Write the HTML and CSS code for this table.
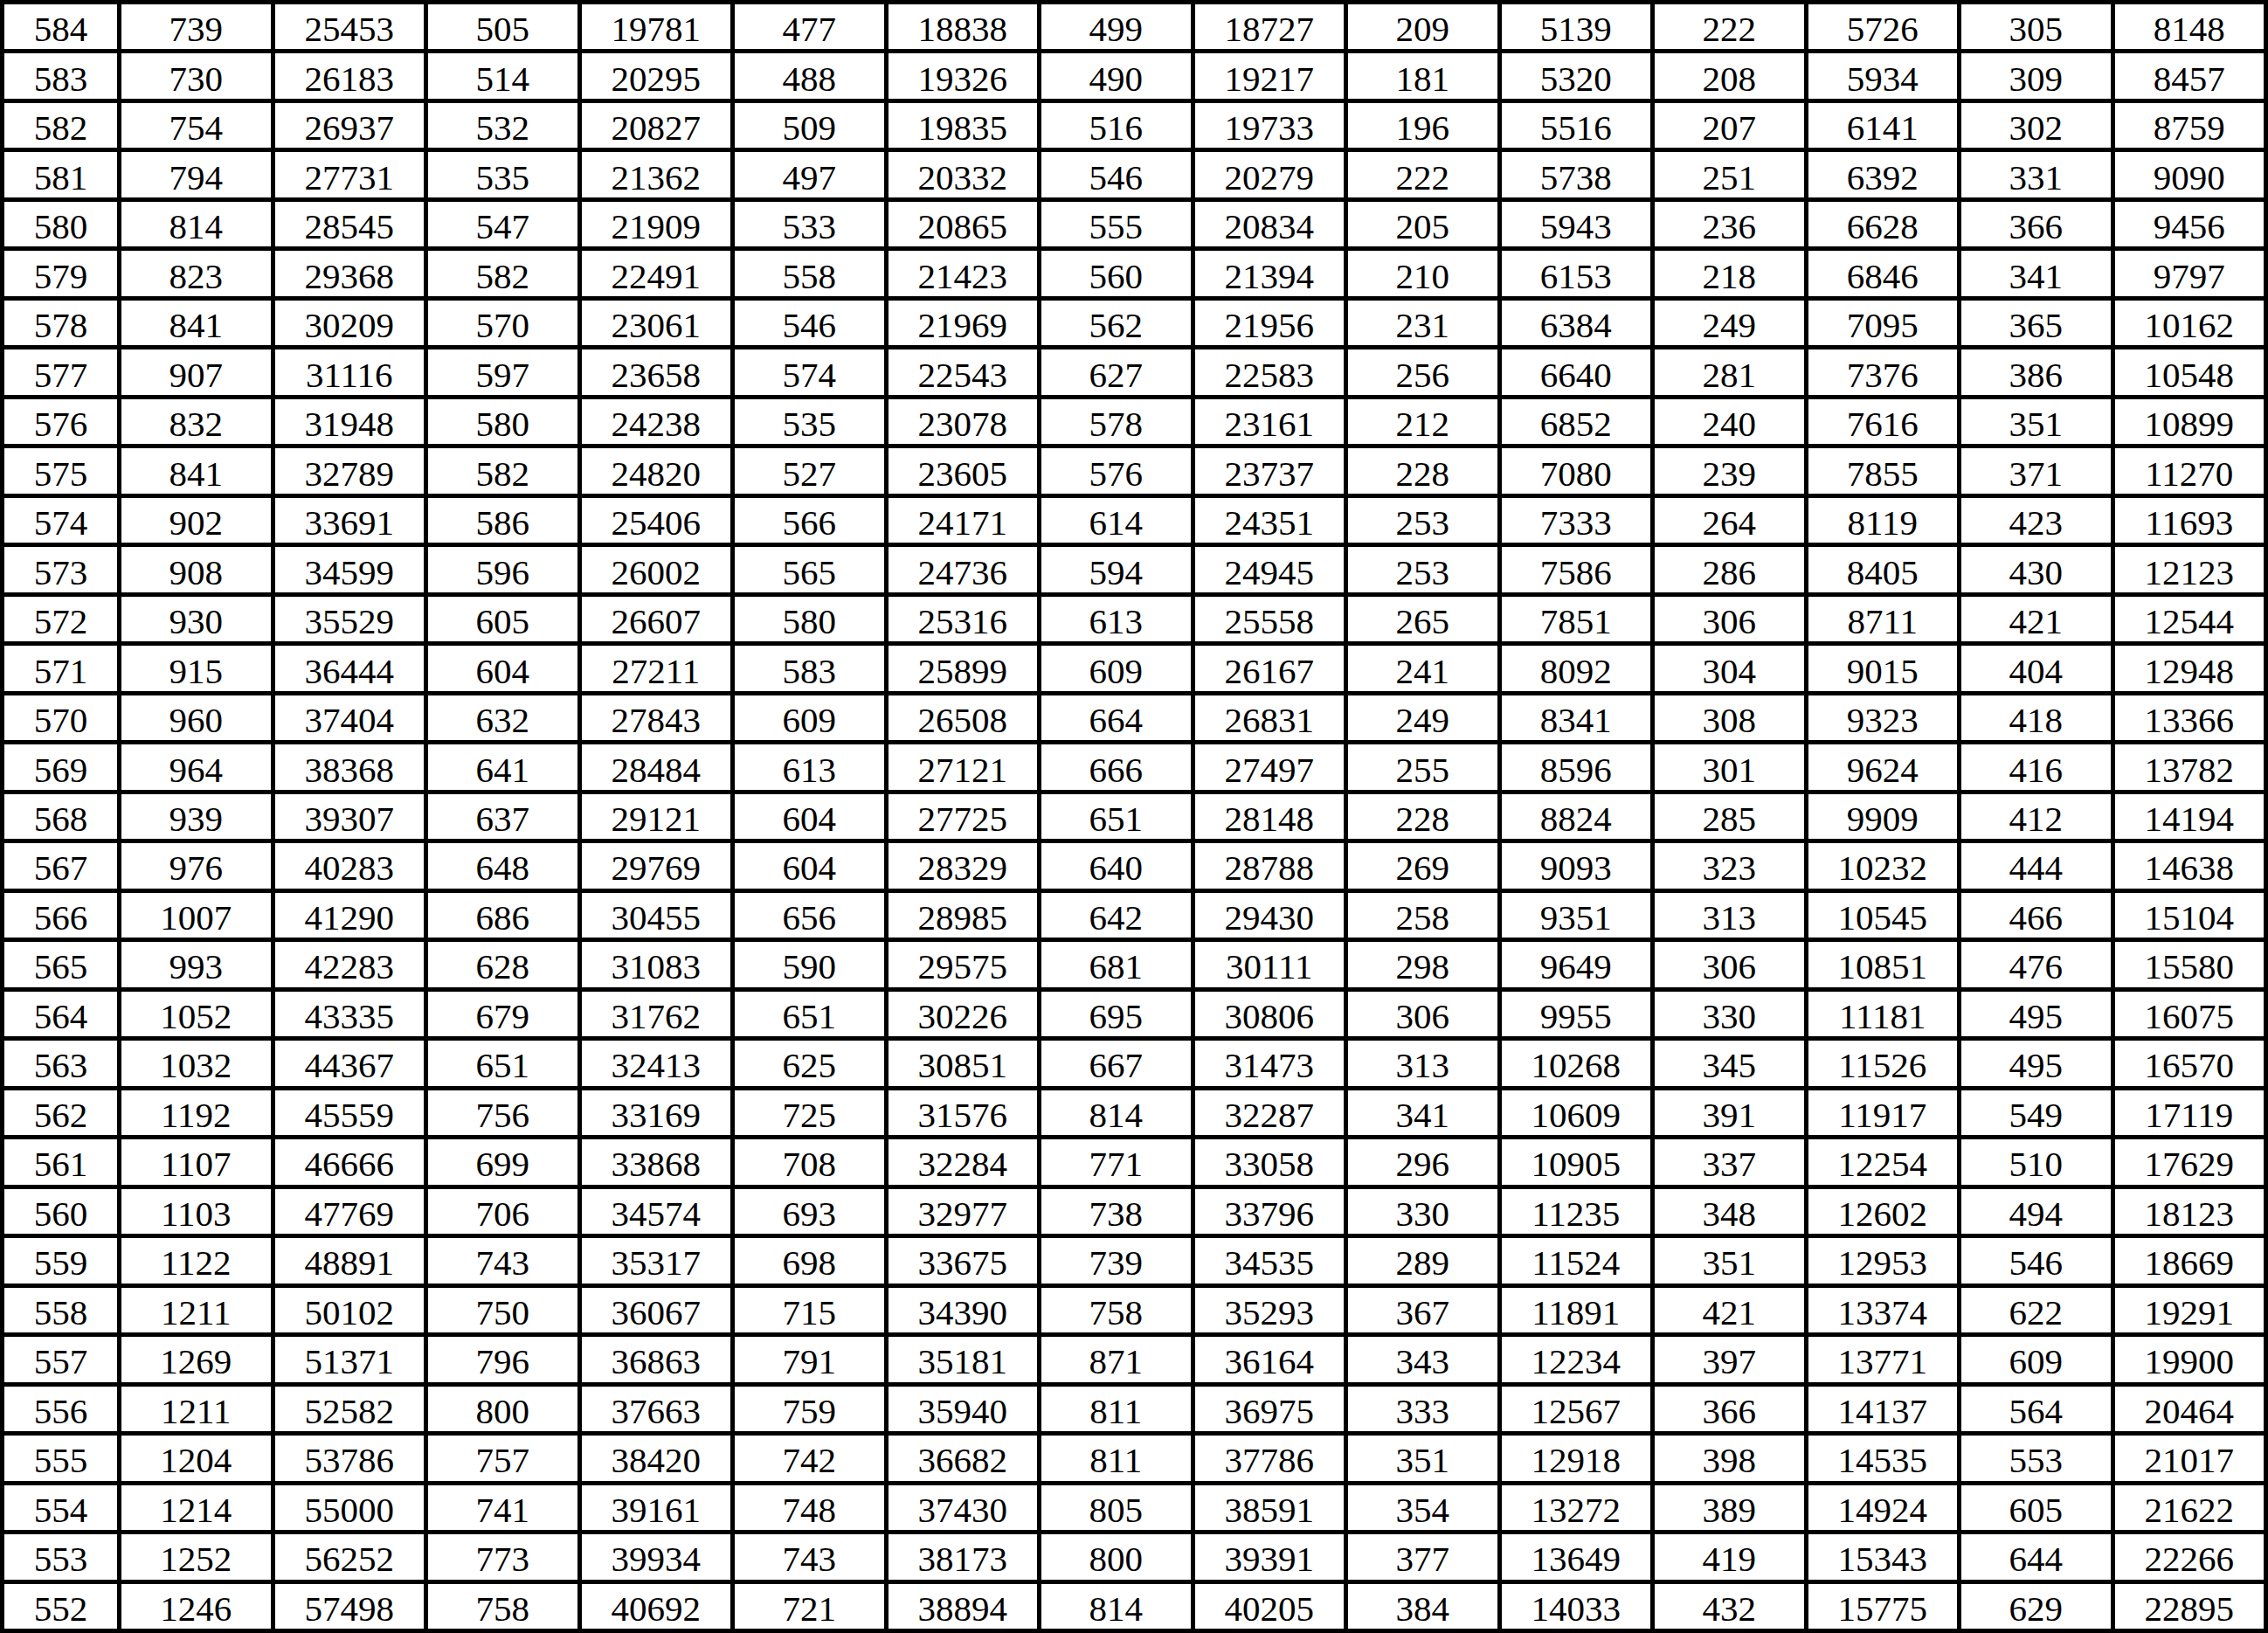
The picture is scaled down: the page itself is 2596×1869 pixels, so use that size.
FILE: index.html
```html
<!DOCTYPE html>
<html>
<head>
<meta charset="utf-8">
<link rel="stylesheet" href="styles.css">
</head>
<body>
<table class="grid">
<colgroup><col class="c-first"><col span="14"></colgroup>
<tbody>
<tr><td>584</td><td>739</td><td>25453</td><td>505</td><td>19781</td><td>477</td><td>18838</td><td>499</td><td>18727</td><td>209</td><td>5139</td><td>222</td><td>5726</td><td>305</td><td>8148</td></tr>
<tr><td>583</td><td>730</td><td>26183</td><td>514</td><td>20295</td><td>488</td><td>19326</td><td>490</td><td>19217</td><td>181</td><td>5320</td><td>208</td><td>5934</td><td>309</td><td>8457</td></tr>
<tr><td>582</td><td>754</td><td>26937</td><td>532</td><td>20827</td><td>509</td><td>19835</td><td>516</td><td>19733</td><td>196</td><td>5516</td><td>207</td><td>6141</td><td>302</td><td>8759</td></tr>
<tr><td>581</td><td>794</td><td>27731</td><td>535</td><td>21362</td><td>497</td><td>20332</td><td>546</td><td>20279</td><td>222</td><td>5738</td><td>251</td><td>6392</td><td>331</td><td>9090</td></tr>
<tr><td>580</td><td>814</td><td>28545</td><td>547</td><td>21909</td><td>533</td><td>20865</td><td>555</td><td>20834</td><td>205</td><td>5943</td><td>236</td><td>6628</td><td>366</td><td>9456</td></tr>
<tr><td>579</td><td>823</td><td>29368</td><td>582</td><td>22491</td><td>558</td><td>21423</td><td>560</td><td>21394</td><td>210</td><td>6153</td><td>218</td><td>6846</td><td>341</td><td>9797</td></tr>
<tr><td>578</td><td>841</td><td>30209</td><td>570</td><td>23061</td><td>546</td><td>21969</td><td>562</td><td>21956</td><td>231</td><td>6384</td><td>249</td><td>7095</td><td>365</td><td>10162</td></tr>
<tr><td>577</td><td>907</td><td>31116</td><td>597</td><td>23658</td><td>574</td><td>22543</td><td>627</td><td>22583</td><td>256</td><td>6640</td><td>281</td><td>7376</td><td>386</td><td>10548</td></tr>
<tr><td>576</td><td>832</td><td>31948</td><td>580</td><td>24238</td><td>535</td><td>23078</td><td>578</td><td>23161</td><td>212</td><td>6852</td><td>240</td><td>7616</td><td>351</td><td>10899</td></tr>
<tr><td>575</td><td>841</td><td>32789</td><td>582</td><td>24820</td><td>527</td><td>23605</td><td>576</td><td>23737</td><td>228</td><td>7080</td><td>239</td><td>7855</td><td>371</td><td>11270</td></tr>
<tr><td>574</td><td>902</td><td>33691</td><td>586</td><td>25406</td><td>566</td><td>24171</td><td>614</td><td>24351</td><td>253</td><td>7333</td><td>264</td><td>8119</td><td>423</td><td>11693</td></tr>
<tr><td>573</td><td>908</td><td>34599</td><td>596</td><td>26002</td><td>565</td><td>24736</td><td>594</td><td>24945</td><td>253</td><td>7586</td><td>286</td><td>8405</td><td>430</td><td>12123</td></tr>
<tr><td>572</td><td>930</td><td>35529</td><td>605</td><td>26607</td><td>580</td><td>25316</td><td>613</td><td>25558</td><td>265</td><td>7851</td><td>306</td><td>8711</td><td>421</td><td>12544</td></tr>
<tr><td>571</td><td>915</td><td>36444</td><td>604</td><td>27211</td><td>583</td><td>25899</td><td>609</td><td>26167</td><td>241</td><td>8092</td><td>304</td><td>9015</td><td>404</td><td>12948</td></tr>
<tr><td>570</td><td>960</td><td>37404</td><td>632</td><td>27843</td><td>609</td><td>26508</td><td>664</td><td>26831</td><td>249</td><td>8341</td><td>308</td><td>9323</td><td>418</td><td>13366</td></tr>
<tr><td>569</td><td>964</td><td>38368</td><td>641</td><td>28484</td><td>613</td><td>27121</td><td>666</td><td>27497</td><td>255</td><td>8596</td><td>301</td><td>9624</td><td>416</td><td>13782</td></tr>
<tr><td>568</td><td>939</td><td>39307</td><td>637</td><td>29121</td><td>604</td><td>27725</td><td>651</td><td>28148</td><td>228</td><td>8824</td><td>285</td><td>9909</td><td>412</td><td>14194</td></tr>
<tr><td>567</td><td>976</td><td>40283</td><td>648</td><td>29769</td><td>604</td><td>28329</td><td>640</td><td>28788</td><td>269</td><td>9093</td><td>323</td><td>10232</td><td>444</td><td>14638</td></tr>
<tr><td>566</td><td>1007</td><td>41290</td><td>686</td><td>30455</td><td>656</td><td>28985</td><td>642</td><td>29430</td><td>258</td><td>9351</td><td>313</td><td>10545</td><td>466</td><td>15104</td></tr>
<tr><td>565</td><td>993</td><td>42283</td><td>628</td><td>31083</td><td>590</td><td>29575</td><td>681</td><td>30111</td><td>298</td><td>9649</td><td>306</td><td>10851</td><td>476</td><td>15580</td></tr>
<tr><td>564</td><td>1052</td><td>43335</td><td>679</td><td>31762</td><td>651</td><td>30226</td><td>695</td><td>30806</td><td>306</td><td>9955</td><td>330</td><td>11181</td><td>495</td><td>16075</td></tr>
<tr><td>563</td><td>1032</td><td>44367</td><td>651</td><td>32413</td><td>625</td><td>30851</td><td>667</td><td>31473</td><td>313</td><td>10268</td><td>345</td><td>11526</td><td>495</td><td>16570</td></tr>
<tr><td>562</td><td>1192</td><td>45559</td><td>756</td><td>33169</td><td>725</td><td>31576</td><td>814</td><td>32287</td><td>341</td><td>10609</td><td>391</td><td>11917</td><td>549</td><td>17119</td></tr>
<tr><td>561</td><td>1107</td><td>46666</td><td>699</td><td>33868</td><td>708</td><td>32284</td><td>771</td><td>33058</td><td>296</td><td>10905</td><td>337</td><td>12254</td><td>510</td><td>17629</td></tr>
<tr><td>560</td><td>1103</td><td>47769</td><td>706</td><td>34574</td><td>693</td><td>32977</td><td>738</td><td>33796</td><td>330</td><td>11235</td><td>348</td><td>12602</td><td>494</td><td>18123</td></tr>
<tr><td>559</td><td>1122</td><td>48891</td><td>743</td><td>35317</td><td>698</td><td>33675</td><td>739</td><td>34535</td><td>289</td><td>11524</td><td>351</td><td>12953</td><td>546</td><td>18669</td></tr>
<tr><td>558</td><td>1211</td><td>50102</td><td>750</td><td>36067</td><td>715</td><td>34390</td><td>758</td><td>35293</td><td>367</td><td>11891</td><td>421</td><td>13374</td><td>622</td><td>19291</td></tr>
<tr><td>557</td><td>1269</td><td>51371</td><td>796</td><td>36863</td><td>791</td><td>35181</td><td>871</td><td>36164</td><td>343</td><td>12234</td><td>397</td><td>13771</td><td>609</td><td>19900</td></tr>
<tr><td>556</td><td>1211</td><td>52582</td><td>800</td><td>37663</td><td>759</td><td>35940</td><td>811</td><td>36975</td><td>333</td><td>12567</td><td>366</td><td>14137</td><td>564</td><td>20464</td></tr>
<tr><td>555</td><td>1204</td><td>53786</td><td>757</td><td>38420</td><td>742</td><td>36682</td><td>811</td><td>37786</td><td>351</td><td>12918</td><td>398</td><td>14535</td><td>553</td><td>21017</td></tr>
<tr><td>554</td><td>1214</td><td>55000</td><td>741</td><td>39161</td><td>748</td><td>37430</td><td>805</td><td>38591</td><td>354</td><td>13272</td><td>389</td><td>14924</td><td>605</td><td>21622</td></tr>
<tr><td>553</td><td>1252</td><td>56252</td><td>773</td><td>39934</td><td>743</td><td>38173</td><td>800</td><td>39391</td><td>377</td><td>13649</td><td>419</td><td>15343</td><td>644</td><td>22266</td></tr>
<tr><td>552</td><td>1246</td><td>57498</td><td>758</td><td>40692</td><td>721</td><td>38894</td><td>814</td><td>40205</td><td>384</td><td>14033</td><td>432</td><td>15775</td><td>629</td><td>22895</td></tr>
</tbody>
</table>
</body>
</html>
```

FILE: styles.css
```css
html, body {
  margin: 0;
  padding: 0;
  background: #ffffff;
}

.grid {
  width: 2596px;
  height: 1869px;
  table-layout: fixed;
  border-collapse: separate;
  border-spacing: 5px;
  background: #000000;
  font-family: "Liberation Serif", "Times New Roman", serif;
  font-size: 41px;
  color: #000000;
}

.c-first {
  width: 129px;
}

.grid td {
  background: #ffffff;
  text-align: center;
  vertical-align: middle;
  padding: 6px 0 0 0;
  line-height: 1;
  white-space: nowrap;
}
```
